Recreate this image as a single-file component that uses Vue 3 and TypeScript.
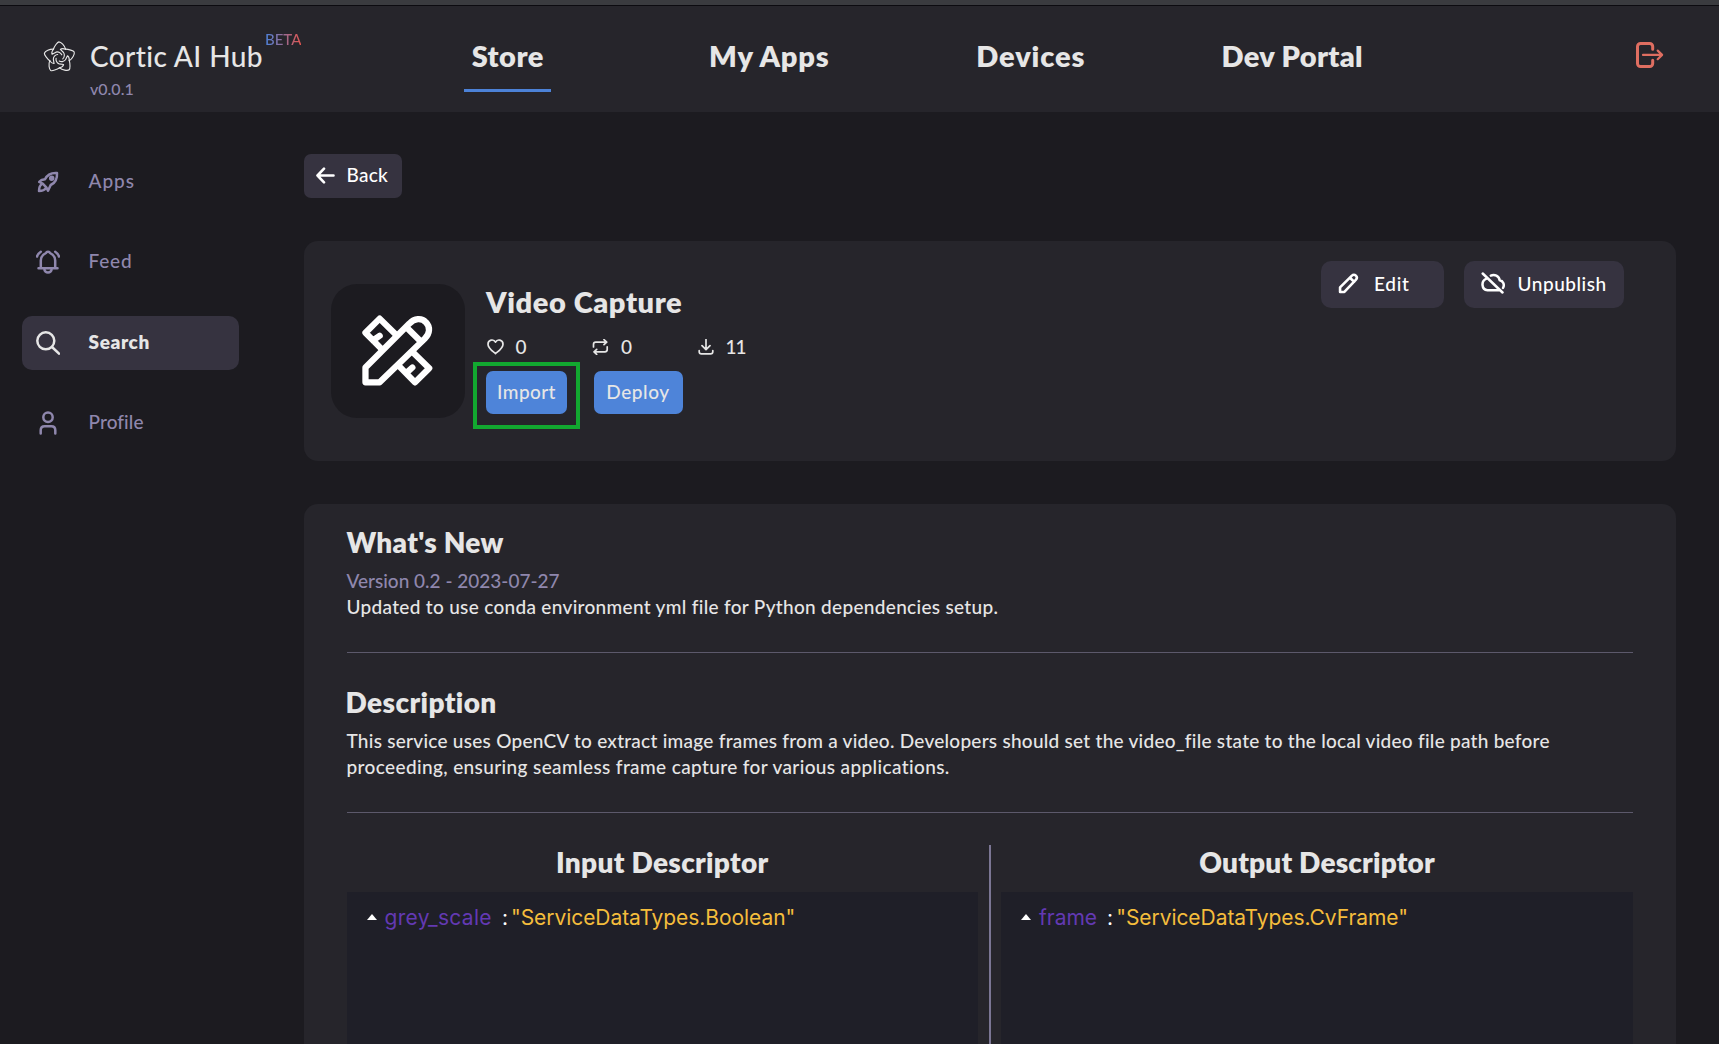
<script setup lang="ts">
interface Entry { id: string; label: string; active?: boolean }
interface Descriptor { id: string; title: string; field: string; type: string }

const tabs: Entry[] = [
  { id: 'store', label: 'Store', active: true },
  { id: 'my-apps', label: 'My Apps' },
  { id: 'devices', label: 'Devices' },
  { id: 'portal', label: 'Dev Portal' },
]

const links: Entry[] = [
  { id: 'apps', label: 'Apps' },
  { id: 'feed', label: 'Feed' },
  { id: 'search', label: 'Search', active: true },
  { id: 'profile', label: 'Profile' },
]

const descriptors: Descriptor[] = [
  { id: 'input', title: 'Input Descriptor', field: 'grey_scale', type: '"ServiceDataTypes.Boolean"' },
  { id: 'output', title: 'Output Descriptor', field: 'frame', type: '"ServiceDataTypes.CvFrame"' },
]

const petals = [0, 72, 144, 216, 288]
</script>

<template>
  <div class="app">
    <header class="header">
      <div class="brand">
        <svg class="logo" viewBox="-16 -16 32 32">
          <g v-for="a in petals" :key="a" :transform="`rotate(${a})`">
            <path d="M-5.900-8C-5-10.800-2-15-.6-15.200 1.500-15.200 5-11.500 5.900-8" />
            <path d="M-5.900-8C-7.500-6-7.800-4.600-7.200-3.200L-3.400-5.200C-1-6 1.500-4.400 2.200-2.600" />
          </g>
        </svg>
        <div class="brand-text">
          <div class="brand-name">Cortic AI Hub</div>
          <div class="version">v0.0.1</div>
        </div>
        <span class="beta">BETA</span>
      </div>
      <nav class="tabs">
        <a v-for="t in tabs" :key="t.id" class="tab" :class="[t.id, { active: t.active }]">{{ t.label }}</a>
      </nav>
      <svg class="logout" viewBox="0 0 28 26">
        <path stroke-width="3" d="M16.700 7.200V4.500a3 3 0 0 0-3-3H4.500a3 3 0 0 0-3 3v17a3 3 0 0 0 3 3h9.200a3 3 0 0 0 3-3v-3.200" />
        <path stroke-width="2.200" d="M7 12.900h19M21.700 8.600l4.400 4.300-4.400 4.300" />
      </svg>
    </header>

    <div class="body">
      <aside class="sidebar">
        <a v-for="l in links" :key="l.id" class="link" :class="[l.id, { active: l.active }]">
          <svg viewBox="0 0 24 24">
            <g v-if="l.id === 'apps'">
              <path d="M9 9.300C11 4.900 15 2.600 21 3c.4 6-1.900 10-6.300 12L12 20.800 10.300 17.300 6.700 13.700 3.200 12 5.600 10z" />
              <path d="M5.800 14.200C3.500 15.600 3 18 3 21c3 0 5.400-.5 6.800-2.800" />
              <circle cx="15.700" cy="8.300" r="1.500" fill="currentColor" />
            </g>
            <g v-else-if="l.id === 'feed'">
              <path d="M2.500 18.200h19M4.800 18V10.500c0-4 2.700-6.200 5.200-7.500.5-1.800 3.500-1.800 4 0 2.500 1.300 5.200 3.500 5.200 7.500V18M8.300 18.500c0 5.300 7.400 5.300 7.400 0M4.800 1.700C3 2.800 1.700 4.400 1 6.500M19.200 1.700c1.800 1.100 3.100 2.700 3.800 4.800" />
            </g>
            <g v-else-if="l.id === 'search'">
              <circle cx="9.800" cy="9.800" r="8.500" />
              <path d="M16 16l7 6.700" />
            </g>
            <g v-else>
              <circle cx="12" cy="6.200" r="4.700" />
              <path d="M4.700 22.500v-3.200c0-2.500 1.500-4 4-4h6.600c2.500 0 4 1.500 4 4v3.200" />
            </g>
          </svg>
          <span>{{ l.label }}</span>
        </a>
      </aside>

      <main class="main">
        <button class="back">
          <svg viewBox="0 0 19 17"><path d="M1.500 8.500H17.500M8 1.700L1.500 8.500 8 15.300" /></svg>
          <span>Back</span>
        </button>

        <section class="card summary">
          <div class="tile">
            <svg viewBox="216 527 214 215">
              <path d="M226 731V686L359 553C374 537 396 535 409 549 423 563 421 584 406 598L269 731ZM350 564l42 42" />
              <path d="M317 585L269 538 226 581 276 631M249 604l20-14M371 641l48 47-43 43-46-47M350 702l18-16" />
            </svg>
          </div>
          <div class="info">
            <h1>Video Capture</h1>
            <div class="stats">
              <span class="stat">
                <svg viewBox="0 0 17 16"><path d="M8.500 14.600C5.500 12 1 9.300 1 5.200 1 .6 6.700-.4 8.500 3.200 10.300-.4 16 .6 16 5.200c0 4.100-4.500 6.800-7.500 9.400z" /></svg>0
              </span>
              <span class="stat">
                <svg viewBox="0 0 17 16"><path d="M1.500 8V5.500C1.500 4 2.300 3.200 3.800 3.200H14.500M12 .7l2.700 2.500L12 5.700M15.200 7.800v2.700c0 1.500-.8 2.300-2.300 2.300H2.200M4.700 10.300L2 12.800l2.700 2.500" /></svg>0
              </span>
              <span class="stat downloads">
                <svg viewBox="0 0 17 16"><path d="M1.200 11.500v1.200c0 1.400.8 2.200 2.200 2.200h9.200c1.400 0 2.200-.8 2.200-2.200v-1.200M8 .5v9.800M4 6.700l4 4 4-4" /></svg>11
              </span>
            </div>
            <div class="buttons">
              <div class="highlight"><button class="primary import">Import</button></div>
              <button class="primary deploy">Deploy</button>
            </div>
          </div>
          <div class="actions">
            <button class="edit">
              <svg viewBox="0 0 24 24"><path d="M3.200 20.800v-4.700L15.300 4c1.500-1.400 3.200-1.300 4.400-.2 1.300 1.300 1.300 3-.1 4.400L7.700 20.800zM13.700 6.200l4.200 4" /></svg>
              <span>Edit</span>
            </button>
            <button class="unpublish">
              <svg viewBox="0 0 24 22"><path d="M1.700 1.500L21.500 20.500M5.500 6.700C-.3 9 .4 17.600 6.500 18.200H18M9.800 3.600c3.700-1.600 8.200.2 8.900 4.700 3.300.5 5.200 4.300 3.300 7.700" /></svg>
              <span>Unpublish</span>
            </button>
          </div>
        </section>

        <section class="card details">
          <h2 class="news-title">What's New</h2>
          <p class="release">Version 0.2 - 2023-07-27</p>
          <p class="notes">Updated to use conda environment yml file for Python dependencies setup.</p>
          <hr />
          <h2 class="about-title">Description</h2>
          <p class="about">
            <span>This service uses OpenCV to extract image frames from a video. Developers should set the video_file state to the local video file path before </span>
            <span>proceeding, ensuring seamless frame capture for various applications.</span>
          </p>
          <hr />
          <div class="descriptors">
            <div v-for="d in descriptors" :key="d.id" class="descriptor" :class="d.id">
              <h2>{{ d.title }}</h2>
              <div class="panel">
                <i class="caret"></i>
                <span class="field">{{ d.field }}</span>
                <span class="colon">:</span>
                <span class="type">{{ d.type }}</span>
              </div>
            </div>
          </div>
        </section>
      </main>
    </div>
  </div>
</template>

<style>
html, body { background: #1c1b20; }
body { overflow: hidden; }
</style>

<style scoped>
.app {
  height: 1044px;
  overflow: hidden;
  display: flex;
  flex-direction: column;
  box-sizing: border-box;
  border-top: 5px solid #3a3b3f;
  background: #1c1b20;
  color: #e6e6e6;
  font: 500 19px Lato, sans-serif;
}
.app *, .app *::after { box-sizing: border-box; }
svg { display: block; flex: none; fill: none; stroke: currentColor; stroke-width: 2.500; stroke-linecap: round; stroke-linejoin: round; }
button { border: 0; font: inherit; display: flex; align-items: center; white-space: nowrap; }
h1, h2, p { margin: 0; white-space: nowrap; }

.header { height: 107px; flex: none; display: flex; background: #26252b; border-top: 1px solid #0c0b10; }
.brand { width: 377px; padding: 33px 0 0 43px; display: flex; }
.logo { width: 33px; height: 33px; margin-top: 2px; stroke-width: 1.100; }
.brand-text { margin-left: 14px; }
.brand-name { font-size: 28px; line-height: 34px; letter-spacing: .4px; white-space: nowrap; }
.version { font-size: 16px; line-height: 20px; margin-top: 6px; color: #8f87ad; }
.beta {
  margin: -10px 0 0 2px;
  align-self: flex-start;
  font-size: 15px;
  line-height: 20px;
  letter-spacing: 0;
  background: linear-gradient(90deg, #4b83dc, #e0554f);
  -webkit-background-clip: text;
  background-clip: text;
  color: transparent;
}
.tabs { display: grid; grid-template-columns: repeat(4, 261.500px); padding-top: 33px; }
.tab { justify-self: center; height: 53px; padding: 0 7px; font-size: 29px; font-weight: 800; line-height: 34px; white-space: nowrap; letter-spacing: .75px; }
.tab.active { border-bottom: 3px solid #4c82d8; letter-spacing: .5px; padding: 0 7.500px; }
.tab.devices { letter-spacing: .85px; }
.tab.portal { letter-spacing: .32px; }
.logout { width: 28px; height: 26px; margin: 36px 0 0 212.500px; color: #df6e61; }

.body { flex: 1; min-height: 0; display: flex; align-items: flex-start; }
.sidebar { width: 303.500px; flex: none; padding: 42.500px 0 0 21.500px; display: flex; flex-direction: column; gap: 26.500px; }
.link { width: 217.500px; height: 54px; padding-left: 14.500px; display: flex; align-items: center; border-radius: 10px; color: #8f87ad; letter-spacing: .8px; }
.link svg { width: 24px; height: 24px; }
.link span { margin-left: 28.500px; padding-bottom: 2.500px; }
.link.apps { letter-spacing: 1px; }
.link.profile { letter-spacing: .1px; }
.link.active { background: #363340; color: #e6e6e6; font-weight: 800; letter-spacing: .6px; }

.main { width: 1372.500px; padding-top: 42px; }
.back { height: 43.500px; width: 98.500px; padding: 0 0 1px 12px; border-radius: 7px; background: #363340; color: #fff; letter-spacing: .25px; }
.back svg { width: 19px; height: 17px; stroke-width: 2.600; margin-top: 1px; }
.back span { margin-left: 12px; padding-bottom: 2px; }
.card { background: #26252b; border-radius: 14px; }

.summary { margin-top: 43px; height: 220px; padding: 43px 52px 0 27px; display: flex; align-items: flex-start; }
.tile { width: 134px; height: 134px; border-radius: 26px; background: #1c1b20; display: flex; align-items: center; justify-content: center; color: #fff; }
.tile svg { width: 71px; height: 71px; stroke-width: 19; overflow: visible; }
.info { margin-left: 21.500px; padding-top: 1px; }
h1 { font-size: 29px; font-weight: 800; line-height: 34px; letter-spacing: .58px; }
.stats { display: flex; margin-top: 16px; height: 24px; line-height: 24px; }
.stat { width: 105.500px; display: flex; align-items: center; gap: 12px; }
.stat svg { width: 17px; height: 16px; stroke-width: 1.700; margin-left: .5px; }
.downloads { letter-spacing: -1px; gap: 11px; }
.buttons { display: flex; gap: 26.500px; margin-top: 12px; }
.primary { height: 43.500px; padding: 0 0 1px; justify-content: center; border-radius: 7px; background: #4e84d9; color: #e6e6e6; }
.import { width: 81px; letter-spacing: .42px; }
.deploy { width: 89px; letter-spacing: .58px; }
.highlight { position: relative; }
.highlight::after { content: ''; position: absolute; left: -13px; top: -9px; width: 107px; height: 67px; border: 4px solid #12a830; }
.actions { margin: -23px 0 0 auto; display: flex; gap: 20px; }
.actions button { height: 47px; padding: 0 0 2px; border-radius: 10px; background: #363340; color: #fff; }
.edit { width: 123px; letter-spacing: .7px; }
.edit svg { width: 23px; height: 23px; margin-left: 16px; stroke-width: 2.700; }
.edit span { margin-left: 14px; }
.unpublish { width: 160px; letter-spacing: .53px; }
.unpublish svg { width: 24px; height: 22px; margin-left: 17px; stroke-width: 2.500; }
.unpublish span { margin-left: 12.500px; }

.details { margin-top: 43.500px; height: 600px; padding: 21px 43px 0; }
h2 { font-size: 28px; font-weight: 800; line-height: 34px; letter-spacing: .3px; }
p { line-height: 26px; }
.release { margin-top: 9px; color: #8f87ad; }
.notes { letter-spacing: .312px; }
hr { height: 1px; border: 0; background: #5c596b; margin: 32px 0; }
.about-title { margin-left: -1px; letter-spacing: .4px; }
.about { margin-top: 9px; }
.about span { display: block; }
.about span:first-child { letter-spacing: .26px; }
.about span:last-child { letter-spacing: .376px; }
.descriptors { display: flex; margin-top: 31px; }
.descriptor { height: 300px; }
.descriptor h2 { text-align: center; line-height: 34px; }
.input { width: 644px; padding-right: 10.500px; border-right: 2px solid #7b7694; }
.output { flex: 1; padding-left: 10.500px; }
.output h2 { letter-spacing: .18px; }
.panel { margin-top: 13px; height: 250px; padding: 11px 0 0 20px; display: flex; align-items: flex-start; background: #1f1f28; font: 400 21px/30px Inter, sans-serif; }
.caret { border: 5px solid transparent; border-top: 0; border-bottom: 6px solid #fff; margin-top: 11px; }
.field { color: #6339b3; margin-left: 8px; }
.input .field { letter-spacing: .3px; }
.colon { color: #fff; margin-left: 10px; }
.type { color: #f5bd3c; margin-left: 3px; letter-spacing: -.06px; }
</style>
